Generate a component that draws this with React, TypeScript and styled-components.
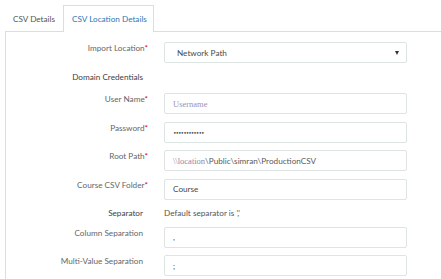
import React from "react";
import styled, { createGlobalStyle } from "styled-components";

const GlobalStyle = createGlobalStyle`
    html, body {
        margin: 0;
        padding: 0;
        background: #ffffff;
        font-family: Lato, "Open Sans", "Liberation Sans", sans-serif;
    }
`

const Page = styled.div`
    width: 441px;
    height: 279px;
    overflow: hidden;
    padding: 5px 0 0 5px;
    box-sizing: border-box;
`

const TabBar = styled.ul`
    list-style: none;
    margin: 0;
    padding: 0;
    display: flex;
    height: 26px;
`

const Tab = styled.li<{ $active?: boolean }>`
    box-sizing: border-box;
    width: ${p => p.$active ? "91px" : "58px"};
    height: ${p => p.$active ? "27px" : "26px"};
    padding-left: ${p => p.$active ? "8px" : "7px"};
    display: flex;
    align-items: center;
    white-space: nowrap;
    font-size: 8.2px;
    color: ${p => p.$active ? "#2f78b5" : "#555"};
    background: #fff;
    border: 1px solid ${p => p.$active ? "#dddddd" : "transparent"};
    border-bottom: none;
    position: relative;
    z-index: 1;
`

const Panel = styled.section`
    border-left: 1px solid #dddddd;
    border-top: 1px solid #dddddd;
    padding-top: 10px;
    height: 300px;
`

const Form = styled.div`
    display: grid;
    grid-template-columns: 142px 243px;
    column-gap: 16px;
    row-gap: 7.5px;
`

const Label = styled.label<{ $strong?: boolean }>`
    text-align: right;
    padding-right: 5px;
    font-size: 8.2px;
    line-height: 12px;
    color: ${p => p.$strong ? "#3e3e3e" : "#666"};
    white-space: nowrap;
`

const Req = styled.span`
    color: #d9001b;
    margin-right: -5px;
`

const Note = styled.div`
    font-size: 8.2px;
    line-height: 12px;
    color: #555;
`

const TextRow = styled.div`
    height: 15px;
`

const Input = styled.input`
    box-sizing: border-box;
    width: 243px;
    height: 21px;
    margin: 0;
    padding: 0 8px;
    border: 1px solid #dde4e4;
    border-radius: 2px;
    font-family: inherit;
    font-size: 8.2px;
    color: #4a4a4a;
    outline: none;

    &::placeholder {
        font-family: "Liberation Serif", serif;
        color: #9c92b4;
        font-size: 8.5px;
    }
    &[type="password"] {
        font-family: "DejaVu Sans", sans-serif;
        letter-spacing: -1px;
        font-size: 6px;
    }
`

const FieldBox = styled.div`
    box-sizing: border-box;
    width: 243px;
    height: 21px;
    padding: 0 8px;
    display: flex;
    align-items: center;
    border: 1px solid #dde4e4;
    border-radius: 2px;
    font-size: 8.2px;
    color: #5a5a5a;
    white-space: nowrap;
`

const Hint = styled.span`
    font-family: "Liberation Serif", serif;
    color: #8f86aa;
    font-size: 8.5px;
`

const Select = styled.div`
    box-sizing: border-box;
    width: 243px;
    height: 21px;
    padding: 0 7px 0 12px;
    display: flex;
    align-items: center;
    justify-content: space-between;
    border: 1px solid #dde4e4;
    border-radius: 2px;
    font-size: 8.2px;
    color: #4a4a4a;
`

const Caret = styled.span`
    width: 0;
    height: 0;
    border-left: 2.5px solid transparent;
    border-right: 2.5px solid transparent;
    border-top: 4px solid #333;
`

export default function App() {
    return (
        <>
            <GlobalStyle />
            <Page>
                <TabBar>
                    <Tab>CSV Details</Tab>
                    <Tab $active>CSV Location Details</Tab>
                </TabBar>
                <Panel>
                    <Form>
                        <Label>Import Location<Req>*</Req></Label>
                        <Select>
                            Network Path
                            <Caret />
                        </Select>

                        <Label $strong>Domain Credentials</Label>
                        <TextRow />

                        <Label>User Name<Req>*</Req></Label>
                        <Input placeholder="Username" />

                        <Label>Password<Req>*</Req></Label>
                        <Input type="password" defaultValue="simran123456" />

                        <Label>Root Path<Req>*</Req></Label>
                        <FieldBox>
                            <Hint>\\location</Hint>\Public\simran\ProductionCSV
                        </FieldBox>

                        <Label>Course CSV Folder<Req>*</Req></Label>
                        <Input defaultValue="Course" />

                        <Label $strong>Separator</Label>
                        <Note>Default separator is ','</Note>

                        <Label>Column Separation</Label>
                        <Input defaultValue="," />

                        <Label>Multi-Value Separation</Label>
                        <Input defaultValue=";" />
                    </Form>
                </Panel>
            </Page>
        </>
    );
}
